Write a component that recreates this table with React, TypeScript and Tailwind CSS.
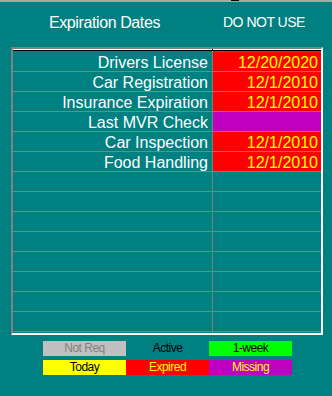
import React from "react";

// Expiration rows; `date` null means the record is missing.
type Row = { label: string; date: string | null };

const rows: Row[] = [
  { label: "Drivers License", date: "12/20/2020" },
  { label: "Car Registration", date: "12/1/2010" },
  { label: "Insurance Expiration", date: "12/1/2010" },
  { label: "Last MVR Check", date: null },
  { label: "Car Inspection", date: "12/1/2010" },
  { label: "Food Handling", date: "12/1/2010" },
];

const TOTAL_ROWS = 14;

const legend = [
  { text: "Not Req", cls: "bg-[#c0c0c0] text-[#808080]" },
  { text: "Active", cls: "text-black" },
  { text: "1-week", cls: "bg-[#00ff00] text-black" },
  { text: "Today", cls: "bg-[#ffff00] text-black" },
  { text: "Expired", cls: "bg-[#ff0000] text-[#ffff00]" },
  { text: "Missing", cls: "bg-[#c000c0] text-[#ffff00]" },
];

function GridRow({ row }: { row?: Row }) {
  const dateCls = row
    ? row.date
      ? "bg-[#ff0000] text-[#ffff00]"
      : "bg-[#c000c0]"
    : "";
  return (
    <div className="flex h-[20px] border-b border-[#808080] text-[16px] leading-[21px]">
      <div className="w-[200px] border-r border-[#808080] pr-[4px] text-right text-white whitespace-nowrap">
        {row?.label}
      </div>
      <div className={`flex-1 pr-[3px] text-right whitespace-nowrap ${dateCls}`}>
        {row?.date}
      </div>
    </div>
  );
}

export default function App() {
  const padded: (Row | undefined)[] = Array.from({ length: TOTAL_ROWS }, (_, i) => rows[i]);

  return (
    <div
      className="relative w-[332px] h-[396px] bg-[#008080] overflow-hidden"
      style={{ fontFamily: '"Liberation Sans", Arial, sans-serif' }}
    >
      {/* window edge along the top */}
      <div className="h-[2px] bg-[#a8a8a8]" />
      <div className="absolute left-[231px] top-0 w-[8px] h-[1px] bg-black" />

      <div className="flex items-end h-[45px] pb-[15px] text-white">
        <span className="w-[223px] pl-[49px] text-[16px] leading-[18px] tracking-[-0.4px]">
          Expiration Dates
        </span>
        <span className="text-[14px] leading-[18px] tracking-[-0.5px] pb-[1px]">DO NOT USE</span>
      </div>

      {/* sunken grid */}
      <div className="ml-[11px] w-[312px] border-l-2 border-t-2 border-[#808080] border-r-2 border-b-2 border-r-white border-b-white">
        <div className="flex h-[2px]">
          <div className="w-[199px] border-t border-white border-b border-b-black" />
          <div className="w-[1px] bg-black" />
          <div className="flex-1 border-t border-white border-b border-b-black" />
        </div>
        <div className="h-[1px] flex">
          <div className="w-[199px]" />
          <div className="w-[1px] bg-[#808080]" />
        </div>
        {padded.map((r, i) => (
          <GridRow key={i} row={r} />
        ))}
        <div className="h-[1px] flex">
          <div className="w-[199px]" />
          <div className="w-[1px] bg-[#808080]" />
        </div>
      </div>

      {/* status legend */}
      <div className="ml-[43px] mt-[6px] grid grid-cols-[83px_83px_83px] gap-y-[4px] text-[12px] leading-[15px] tracking-[-0.5px]">
        {legend.map((l) => (
          <div key={l.text} className={`h-[15px] text-center ${l.cls}`}>
            {l.text}
          </div>
        ))}
      </div>
    </div>
  );
}
